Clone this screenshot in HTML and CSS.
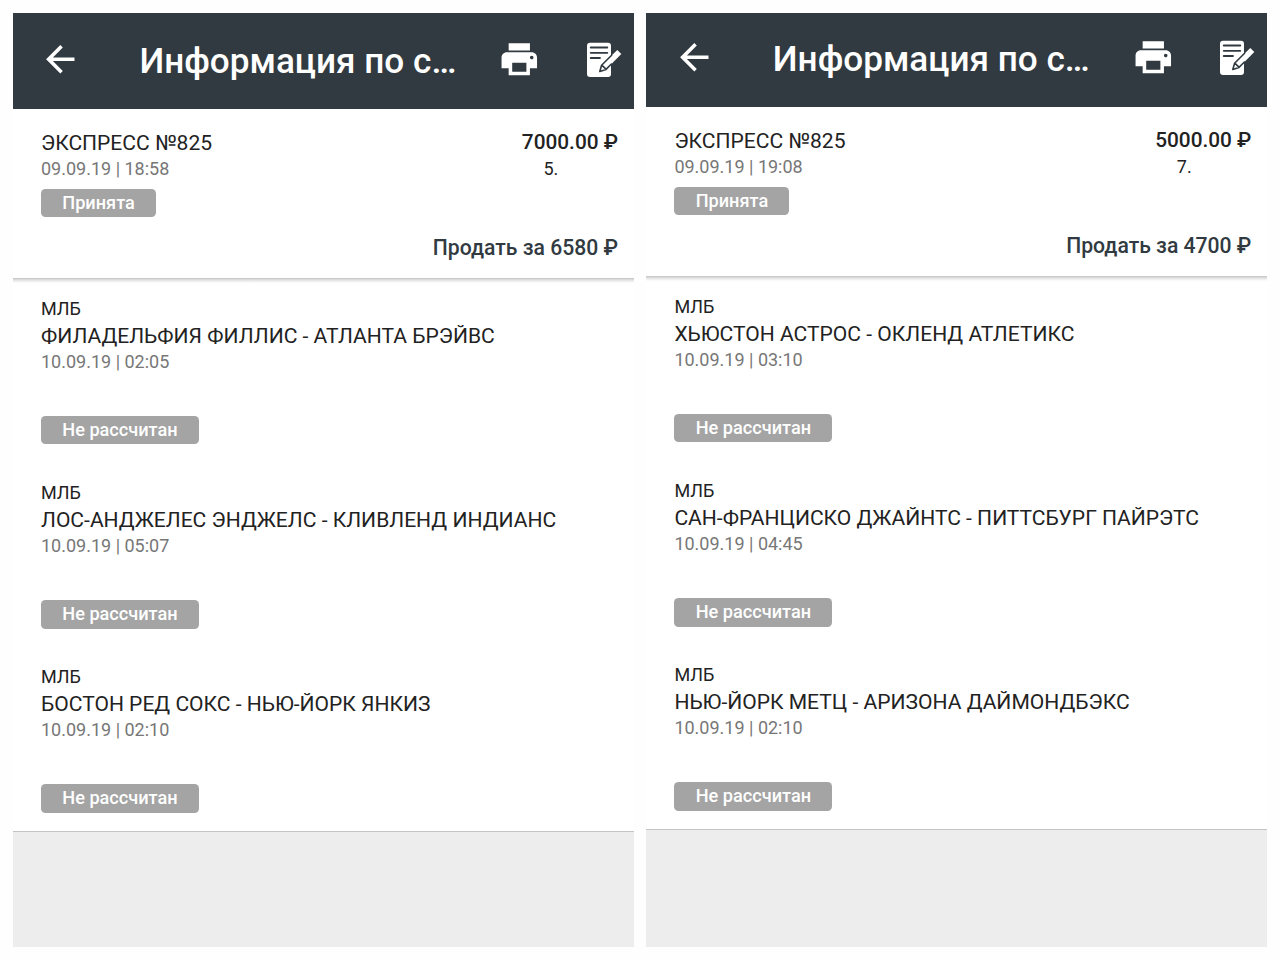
FILE: index.html
```html
<!DOCTYPE html>
<html lang="ru">
<head>
<meta charset="utf-8">
<title>Информация по ставке</title>
<link rel="stylesheet" href="styles.css">
</head>
<body>
<svg class="defs" width="0" height="0">
  <symbol id="back" viewBox="0 0 24 24"><path d="M20 11H7.83l5.59-5.59L12 4l-8 8 8 8 1.41-1.41L7.83 13H20z"/></symbol>
  <symbol id="print" viewBox="0 0 24 24"><path d="M19 8H5c-1.66 0-3 1.34-3 3v6h4v4h12v-4h4v-6c0-1.66-1.34-3-3-3zm-3 11H8v-5h8v5zm3-7c-.55 0-1-.45-1-1s.45-1 1-1 1 .45 1 1-.45 1-1 1zm-1-9H6v4h12V3z"/></symbol>
  <symbol id="edit" viewBox="0 0 36 36">
    <rect x="1" y="0.8" width="24" height="34.2" rx="3"/>
    <path class="ink" d="M4.7 5.5H21.3M4.7 10.8H21.3M4.7 16H14"/>
    <path d="M31.3 7.9L35.3 12L20 27.4L14 29.6L15.6 23.2Z"/>
    <path class="ink thin" d="M16 23.4L20 27.2M25.4 22L20 27.4L13.8 29.5L15.6 23.2L25.6 13.2"/>
  </symbol>
</svg>
<main class="board">
  <section class="phone">
    <header class="bar">
      <svg class="icon"><use href="#back"/></svg>
      <h1 class="title">Информация по с…</h1>
      <svg class="icon print"><use href="#print"/></svg>
      <svg class="icon-edit"><use href="#edit"/></svg>
    </header>
    <div class="summary">
      <div class="row">
        <div><div class="name">ЭКСПРЕСС №825</div><div class="date">09.09.19 | 18:58</div></div>
        <div class="sum"><div class="amount">7000.00 ₽</div><div class="odds">5.</div></div>
      </div>
      <span class="badge">Принята</span>
      <div class="sell">Продать за 6580 ₽</div>
    </div>
    <div class="events">
      <article class="event"><div class="league">МЛБ</div><div class="name">ФИЛАДЕЛЬФИЯ ФИЛЛИС - АТЛАНТА БРЭЙВС</div><div class="date">10.09.19 | 02:05</div><span class="badge">Не рассчитан</span></article>
      <article class="event"><div class="league">МЛБ</div><div class="name">ЛОС-АНДЖЕЛЕС ЭНДЖЕЛС - КЛИВЛЕНД ИНДИАНС</div><div class="date">10.09.19 | 05:07</div><span class="badge">Не рассчитан</span></article>
      <article class="event"><div class="league">МЛБ</div><div class="name">БОСТОН РЕД СОКС - НЬЮ-ЙОРК ЯНКИЗ</div><div class="date">10.09.19 | 02:10</div><span class="badge">Не рассчитан</span></article>
    </div>
  </section>
  <section class="phone cropped">
    <header class="bar">
      <svg class="icon"><use href="#back"/></svg>
      <h1 class="title">Информация по с…</h1>
      <svg class="icon print"><use href="#print"/></svg>
      <svg class="icon-edit"><use href="#edit"/></svg>
    </header>
    <div class="summary">
      <div class="row">
        <div><div class="name">ЭКСПРЕСС №825</div><div class="date">09.09.19 | 19:08</div></div>
        <div class="sum"><div class="amount">5000.00 ₽</div><div class="odds">7.</div></div>
      </div>
      <span class="badge">Принята</span>
      <div class="sell">Продать за 4700 ₽</div>
    </div>
    <div class="events">
      <article class="event"><div class="league">МЛБ</div><div class="name">ХЬЮСТОН АСТРОС - ОКЛЕНД АТЛЕТИКС</div><div class="date">10.09.19 | 03:10</div><span class="badge">Не рассчитан</span></article>
      <article class="event"><div class="league">МЛБ</div><div class="name">САН-ФРАНЦИСКО ДЖАЙНТС - ПИТТСБУРГ ПАЙРЭТС</div><div class="date">10.09.19 | 04:45</div><span class="badge">Не рассчитан</span></article>
      <article class="event"><div class="league">МЛБ</div><div class="name">НЬЮ-ЙОРК МЕТЦ - АРИЗОНА ДАЙМОНДБЭКС</div><div class="date">10.09.19 | 02:10</div><span class="badge">Не рассчитан</span></article>
    </div>
  </section>
</main>
</body>
</html>
```
FILE: styles.css
```css
* { box-sizing: border-box; }
body { margin: 0; background: #fefefe; font-family: Roboto, "Noto Sans", sans-serif; color: #222; }
.defs { display: block; height: 0; }
.board { display: flex; gap: 12px; height: 960px; padding: 12.6px; }
.phone { width: 621.4px; height: 934.4px; background: #ededed; overflow: hidden; }
.bar { display: flex; align-items: flex-start; height: 96.4px; padding: 25.6px 10px 0 26.8px; background: #313a40; color: #fff; }
.cropped .bar { height: 94.4px; padding-top: 23.6px; }
.icon { flex: none; width: 42.6px; height: 42.6px; fill: #fff; }
.title { flex: none; width: 402px; margin: 0; padding-left: 57.4px; font-size: 35.15px; font-weight: 500; line-height: 46px; white-space: nowrap; }
.bar .print { margin: 0 0 0 14.4px; }
.icon-edit { flex: none; width: 36px; height: 36px; margin: 3.5px 0 0 45px; fill: #fff; }
.ink { fill: none; stroke: #313a40; stroke-width: 1.8; stroke-linecap: round; stroke-linejoin: round; }
.thin { stroke-width: 1.6; }
.summary { height: 169px; padding: 19.6px 16px 0 28.4px; background: #fff; }
.row { display: flex; justify-content: space-between; }
.name { font-size: 21.05px; line-height: 27px; white-space: nowrap; }
.date { font-size: 18px; line-height: 26px; color: #777; }
.sum { text-align: center; }
.amount { font-size: 20.8px; font-weight: 500; line-height: 27px; }
.odds { font-size: 18px; line-height: 26px; padding-right: 38px; }
.badge { display: block; width: max-content; height: 28.4px; margin-top: 7.4px; padding: 0 21.3px; border-radius: 4.5px; background: #a4a4a4; color: #fff; font-size: 18.15px; font-weight: 500; line-height: 28.4px; }
.sell { margin-top: 17px; text-align: right; font-size: 21.15px; font-weight: 500; line-height: 27px; color: #313a40; }
.events { height: 554px; padding: 17px 28.4px 0; background: linear-gradient(#c2c2c2, #e2e2e2 2px, #fff 5px); border-bottom: 1.5px solid #c4c4c4; }
.event { height: 184.2px; }
.league { font-size: 18px; line-height: 27px; }
.event .badge { margin-top: 41px; }
```
